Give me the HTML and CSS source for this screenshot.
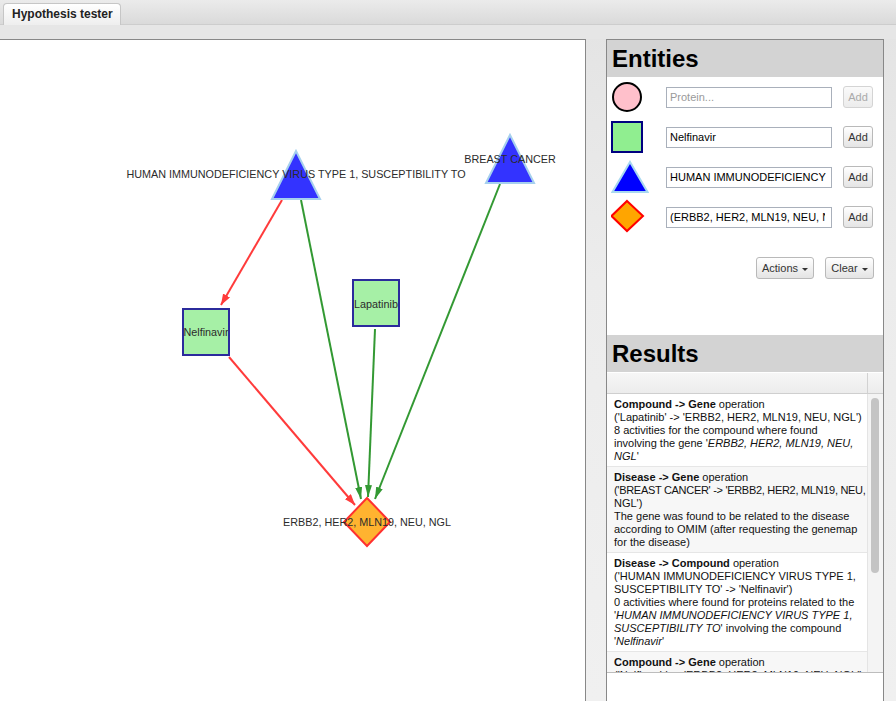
FILE: index.html
```html
<!DOCTYPE html>
<html>
<head>
<meta charset="utf-8">
<title>Hypothesis tester</title>
<link rel="stylesheet" href="styles.css">
</head>
<body>
<div class="tabbar"><div class="tab">Hypothesis tester</div></div>
<div class="strip"></div>
<div class="main">
  <div class="canvas">
    <svg class="graph" width="585" height="661" viewBox="0 40 585 661">
      <defs>
        <marker id="ar" markerUnits="userSpaceOnUse" markerWidth="11" markerHeight="8" refX="11" refY="4" orient="auto">
          <path d="M0,0 L11,4 L0,8 z" fill="#ff3b3b"/>
        </marker>
        <marker id="ag" markerUnits="userSpaceOnUse" markerWidth="12" markerHeight="7" refX="12" refY="3.5" orient="auto">
          <path d="M0,0 L12,3.5 L0,7 z" fill="#339933"/>
        </marker>
      </defs>
      <g class="edges">
        <line x1="282" y1="200" x2="221" y2="305" class="e-red" marker-end="url(#ar)"/>
        <line x1="229" y1="357" x2="355" y2="505" class="e-red" marker-end="url(#ar)"/>
        <line x1="301" y1="200" x2="361" y2="499" class="e-green" marker-end="url(#ag)"/>
        <line x1="375" y1="329" x2="368" y2="497" class="e-green" marker-end="url(#ag)"/>
        <line x1="500" y1="184" x2="375" y2="499" class="e-green" marker-end="url(#ag)"/>
      </g>
      <g class="nodes">
        <polygon points="296,151 272,199 320,199" class="n-tri"/>
        <polygon points="510,135 486,183 534,183" class="n-tri"/>
        <rect x="183" y="309" width="46" height="46" class="n-sq"/>
        <rect x="353" y="280" width="46" height="46" class="n-sq"/>
        <polygon points="367,498 390,522 367,546 344,522" class="n-dia"/>
      </g>
      <g class="labels">
        <text x="296" y="178">HUMAN IMMUNODEFICIENCY VIRUS TYPE 1, SUSCEPTIBILITY TO</text>
        <text x="510" y="163">BREAST CANCER</text>
        <text x="206" y="336">Nelfinavir</text>
        <text x="376" y="308">Lapatinib</text>
        <text x="367" y="526">ERBB2, HER2, MLN19, NEU, NGL</text>
      </g>
    </svg>
  </div>
  <div class="side">
    <div class="phead">Entities</div>
    <div class="entities">
      <div class="erow">
        <svg class="shape" width="38" height="36" viewBox="0 0 38 36"><circle cx="16" cy="18" r="14" fill="#ffc0cb" stroke="#000" stroke-width="2"/></svg>
        <input class="einput" type="text" placeholder="Protein...">
        <button class="addbtn" disabled>Add</button>
      </div>
      <div class="erow">
        <svg class="shape" width="38" height="36" viewBox="0 0 38 36"><rect x="1" y="3" width="30" height="30" fill="#90ee90" stroke="#000080" stroke-width="2"/></svg>
        <input class="einput" type="text" value="Nelfinavir">
        <button class="addbtn">Add</button>
      </div>
      <div class="erow">
        <svg class="shape" width="38" height="36" viewBox="0 0 38 36"><polygon points="19,3 1.5,33 36.5,33" fill="#0000ff" stroke="#a8d8f0" stroke-width="2"/></svg>
        <input class="einput" type="text" value="HUMAN IMMUNODEFICIENCY VIRUS TYPE 1, SUSCEPTIBILITY TO">
        <button class="addbtn">Add</button>
      </div>
      <div class="erow">
        <svg class="shape" width="38" height="36" viewBox="0 0 38 36"><polygon points="16,2 32,17 16,32 0.5,17" fill="#ffa500" stroke="#ff0000" stroke-width="2"/></svg>
        <input class="einput tightin" type="text" value="(ERBB2, HER2, MLN19, NEU, NGL)">
        <button class="addbtn">Add</button>
      </div>
      <div class="actions">
        <button class="mbtn w-actions">Actions <span class="caret"></span></button>
        <button class="mbtn w-clear">Clear <span class="caret"></span></button>
      </div>
    </div>
    <div class="phead">Results</div>
    <div class="gridhead"><div class="gh-main"></div><div class="gh-side"></div></div>
    <div class="listwrap">
      <div class="list">
        <div class="item">
          <div><b>Compound -&gt; Gene</b> operation</div>
          <div>('Lapatinib' -&gt; 'ERBB2, HER2, MLN19, NEU, NGL')</div>
          <div>8 activities for the compound where found<br>involving the gene '<i>ERBB2, HER2, MLN19, NEU,<br>NGL</i>'</div>
        </div>
        <div class="item alt">
          <div><b>Disease -&gt; Gene</b> operation</div>
          <div><span class="tight">('BREAST CANCER' -&gt; 'ERBB2, HER2, MLN19, NEU,</span><br>NGL')</div>
          <div>The gene was found to be related to the disease<br>according to OMIM (after requesting the genemap<br>for the disease)</div>
        </div>
        <div class="item">
          <div><b>Disease -&gt; Compound</b> operation</div>
          <div>('HUMAN IMMUNODEFICIENCY VIRUS TYPE 1,<br>SUSCEPTIBILITY TO' -&gt; 'Nelfinavir')</div>
          <div>0 activities where found for proteins related to the<br>'<i>HUMAN IMMUNODEFICIENCY VIRUS TYPE 1,<br>SUSCEPTIBILITY TO</i>' involving the compound<br>'<i>Nelfinavir</i>'</div>
        </div>
        <div class="item alt">
          <div><b>Compound -&gt; Gene</b> operation</div>
          <div>('Nelfinavir' -&gt; 'ERBB2, HER2, MLN19, NEU, NGL')</div>
          <div>0 activities where found for proteins related to the</div>
        </div>
      </div>
      <div class="scrolltrack"><div class="thumb"></div></div>
    </div>
  </div>
</div>
</body>
</html>
```
FILE: styles.css
```css
* { box-sizing: border-box; }
html, body { margin: 0; padding: 0; }
body {
  width: 896px;
  height: 701px;
  overflow: hidden;
  font-family: "Liberation Sans", Arial, sans-serif;
  background: linear-gradient(#e3e3e3, #ececec 40%, #f0f0f0);
  color: #000;
}
.tabbar {
  height: 25px;
  padding: 3px 0 0 3px;
  background: linear-gradient(#ebebeb, #dadada);
  border-bottom: 1px solid #cdcdcd;
}
.tab {
  width: 118px;
  height: 22px;
  background: linear-gradient(#ffffff, #eeeeee);
  border: 1px solid #c6c6c6;
  border-bottom: none;
  border-radius: 4px 4px 0 0;
  font-weight: bold;
  font-size: 12px;
  line-height: 21px;
  color: #222;
  padding-left: 8px;
}
.strip {
  height: 14px;
  background: #e6e6e6;
}
.main {
  display: flex;
  gap: 20px;
  height: 662px;
}
.canvas {
  width: 586px;
  background: #fff;
  border-top: 1px solid #888;
  border-right: 1px solid #888;
}
.graph { display: block; }
.e-red { stroke: #ff3b3b; stroke-width: 2; }
.e-green { stroke: #339933; stroke-width: 2; }
.n-tri { fill: #3333ff; stroke: #a6d0ee; stroke-width: 2; stroke-linejoin: miter; }
.n-sq { fill: #a6f0a6; stroke: #2b2b9c; stroke-width: 2; }
.n-dia { fill: #ffb330; stroke: #ff3030; stroke-width: 2; }
.labels text {
  font-family: "Liberation Sans", Arial, sans-serif;
  font-size: 10.8px;
  fill: #2b2b2b;
  text-anchor: middle;
}
.side {
  width: 278px;
  background: #fff;
  border: 1px solid #888;
  border-bottom: none;
  display: flex;
  flex-direction: column;
}
.phead {
  height: 37px;
  line-height: 37px;
  background: #d3d3d3;
  font-size: 24px;
  font-weight: bold;
  padding-left: 5px;
}
.entities {
  height: 258px;
}
.erow {
  display: flex;
  align-items: center;
  height: 40px;
  padding-left: 4px;
}
.shape { display: block; flex: none; }
.einput {
  margin-left: 17px;
  width: 166px;
  height: 21px;
  border: 1px solid #a9b0bb;
  padding: 0 3px;
  font-family: "Liberation Sans", Arial, sans-serif;
  font-size: 11px;
  color: #000;
  background: #fff;
  outline: none;
}
.einput.tightin { padding-right: 6px; }
.einput::placeholder { color: #9a9a9a; }
.addbtn {
  margin-left: 11px;
  width: 30px;
  height: 22px;
  padding: 0;
  border: 1px solid #b9b9b9;
  border-radius: 3px;
  background: linear-gradient(#ffffff, #e4e4e4);
  font-family: "Liberation Sans", Arial, sans-serif;
  font-size: 11px;
  color: #333;
}
.addbtn:disabled {
  color: #aaa;
  border-color: #d4d4d4;
  background: linear-gradient(#fafafa, #ececec);
}
.actions {
  display: flex;
  justify-content: flex-end;
  gap: 11px;
  padding-right: 9px;
  margin-top: 20px;
}
.mbtn {
  height: 22px;
  padding: 0;
  border: 1px solid #b9b9b9;
  border-radius: 3px;
  background: linear-gradient(#ffffff, #e4e4e4);
  font-family: "Liberation Sans", Arial, sans-serif;
  font-size: 11px;
  color: #333;
}
.w-actions { width: 58px; }
.w-clear { width: 49px; }
.caret {
  display: inline-block;
  width: 0;
  height: 0;
  border-left: 3px solid transparent;
  border-right: 3px solid transparent;
  border-top: 3px solid #333;
  vertical-align: middle;
  margin-left: 1px;
}
.gridhead {
  display: flex;
  height: 21px;
  margin-top: 1px;
  border-bottom: 1px solid #cfcfcf;
  background: linear-gradient(#f6f6f6, #ececec);
}
.gh-main { flex: 1; }
.gh-side { width: 16px; border-left: 1px solid #d2d2d2; }
.listwrap {
  display: flex;
  height: 279px;
  border-bottom: 1px solid #bdbdbd;
}
.list {
  flex: 1;
  overflow: hidden;
}
.item {
  padding: 4px 2px 3px 7px;
  border-bottom: 1px solid #e6e6e6;
  font-size: 11px;
  line-height: 13px;
  white-space: nowrap;
  color: #111;
}
.item.alt { background: #f7f7f7; }
.tight { letter-spacing: -0.3px; }
.scrolltrack {
  width: 16px;
  background: #f4f4f4;
  border-left: 1px solid #e4e4e4;
  padding: 4px 0 0 3px;
}
.thumb {
  width: 8px;
  height: 175px;
  border-radius: 4px;
  background: #c4c4c4;
}
```
